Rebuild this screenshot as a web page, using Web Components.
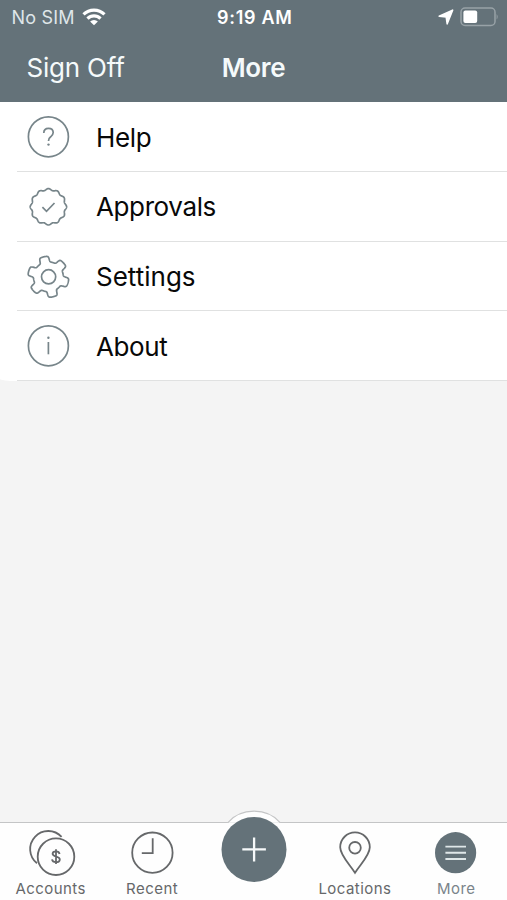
<!DOCTYPE html>
<html lang="en">
<head>
<meta charset="utf-8">
<title>More</title>
<style>
    body {
        margin: 0;
        font-family: Inter, "Liberation Sans", sans-serif;
        --slate: #647279;
    }
</style>
</head>
<body>
<mobile-app></mobile-app>

<script>
const outline = (name) => {
    // Closed wavy outlines for the seal and the gear
    const points = [];
    for (let i = 0; i < 360; i++) {
        const a = i * Math.PI / 180;
        let r;
        if (name === 'seal') {
            r = 17.4 + 0.8 * Math.cos(12 * (a + Math.PI / 2));
        } else {
            const wave = Math.cos(6 * (a + 103 * Math.PI / 180)) + 0.05;
            r = 17.7 + 2.8 * Math.tanh(3.2 * wave);
        }
        points.push((22 + r * Math.cos(a)).toFixed(2) + ' ' + (22 + r * Math.sin(a)).toFixed(2));
    }
    return 'M' + points.join('L') + 'Z';
};

const icons = {
    help: `<circle cx="22" cy="22" r="20"/><path d="M17.4 18.2c0-3 2-4.7 4.7-4.7s4.7 1.7 4.7 4.3c0 2.2-1.1 3.1-2.5 4.2-1.5 1.1-2.2 1.9-2.2 4.2"/><circle cx="22.1" cy="29.8" r="1.2" fill="currentColor" stroke="none"/>`,
    approvals: `<path d="${outline('seal')}"/><path d="M16 22.4l4.1 4.1 8-8.3"/>`,
    settings: `<path d="${outline('gear')}" stroke-linejoin="round"/><circle cx="22.2" cy="22" r="7.1"/>`,
    about: `<circle cx="22" cy="22" r="20"/><path d="M22 18.2V30.5"/><circle cx="22" cy="14" r="1.2" fill="currentColor" stroke="none"/>`,
    accounts: `<path d="M9 33.3A18.1 18.1 0 1 1 33.6 6.9"/><circle cx="28" cy="26.7" r="18.3"/><path stroke-width="1.8" d="M31.6 24c-.3-1.8-1.6-2.7-3.6-2.7-2.1 0-3.4 1-3.4 2.5 0 3.5 7.2 1.9 7.2 5.6 0 1.7-1.5 2.7-3.8 2.7-2.3 0-3.7-1-4-2.8M28 19.3V34"/>`,
    recent: `<circle cx="23.4" cy="22.7" r="20.2"/><path d="M23.7 8.3v14.9H12.8"/>`,
    locations: `<path d="M23 42.8C18 34.7 8.2 25.4 8.2 17.2a14.8 14.8 0 0 1 29.6 0C37.8 25.4 28 34.7 23 42.8Z"/><circle cx="23" cy="17.8" r="5.8"/>`,
    more: `<circle cx="22.6" cy="22.7" r="20.6" fill="currentColor" stroke="none"/><path stroke="#dfe7e9" stroke-width="1.9" d="M12.4 16.6h20.6M12.4 22.8h20.6M12.4 29h20.6"/>`
};

class StatusBar extends HTMLElement {
    constructor() {
        super();
        this.attachShadow({ mode: 'open' });
        this.shadowRoot.innerHTML = `
            <style>
                :host {
                    display: grid;
                    grid-template-columns: 1fr auto 1fr;
                    align-items: center;
                    height: 34px;
                    padding: 0 8px 0 11.5px;
                    font-size: 18px;
                    color: #fff;
                }
                .carrier, .power { display: flex; align-items: center; }
                .carrier { color: #dfe6e9; letter-spacing: 0.2px; gap: 7.5px; }
                .power { justify-content: flex-end; gap: 6px; }
                .time { font-weight: 600; letter-spacing: 0.7px; margin-right: 1px; }
                svg { display: block; }
            </style>
            <div class="carrier">
                <span>No SIM</span>
                <svg width="24" height="18" viewBox="0 0 24 18" fill="none" stroke="#fff" stroke-width="3.2">
                    <path d="M1.5 6.4a15 15 0 0 1 21 0M5.5 10.6a9.2 9.2 0 0 1 13 0"/>
                    <path d="M12 17.3L8.1 13.6a5.5 5.5 0 0 1 7.8 0Z" fill="#fff" stroke="none"/>
                </svg>
            </div>
            <div class="time">9:19 AM</div>
            <div class="power">
                <svg width="16" height="16" viewBox="0 0 16 16"><path d="M14.6 1.2L9.2 14.8 8.2 7.9 1.2 7.3Z" fill="#fff" stroke="#fff" stroke-width="1.6" stroke-linejoin="round"/></svg>
                <svg width="39" height="20" viewBox="0 0 39 20">
                    <rect x="1" y="1" width="34" height="17.5" rx="4" fill="none" stroke="#98a2a7" stroke-width="1.5"/>
                    <rect x="3.4" y="3.4" width="13.8" height="12.6" rx="2" fill="#fff"/>
                    <path d="M36.6 7q2.2 2.8 0 5.6Z" fill="#98a2a7"/>
                </svg>
            </div>
        `;
    }
}

class NavBar extends HTMLElement {
    constructor() {
        super();
        this.attachShadow({ mode: 'open' });
        this.shadowRoot.innerHTML = `
            <style>
                :host {
                    display: grid;
                    grid-template-columns: 1fr auto 1fr;
                    align-items: center;
                    height: 66px;
                    padding: 0 26.5px;
                    color: #f5fafb;
                    font-size: 26px;
                    letter-spacing: -0.2px;
                }
                .title { font-weight: 600; letter-spacing: -0.3px; }
            </style>
            <div><slot name="left"></slot></div>
            <div class="title"><slot></slot></div>
        `;
    }
}

class MenuItem extends HTMLElement {
    constructor() {
        super();
        this.attachShadow({ mode: 'open' });
        this.shadowRoot.innerHTML = `
            <style>
                :host {
                    display: flex;
                    box-sizing: border-box;
                    height: 69.75px;
                    padding-left: 17px;
                    background: #fff;
                }
                :host(:last-of-type) { border-bottom-left-radius: 17px 2px; }
                .row {
                    flex: 1;
                    box-sizing: border-box;
                    display: flex;
                    align-items: center;
                    gap: 26px;
                    padding: 1.5px 0 0 9px;
                    border-bottom: 1px solid #e0e1e1;
                    font-size: 26px;
                    letter-spacing: -0.38px;
                    color: #080808;
                }
                svg { color: #77858a; }
                :host([icon="settings"]) .row { letter-spacing: 0; }
            </style>
            <div class="row">
                <svg width="44" height="44" viewBox="-0.4 0.2 44 44" fill="none" stroke="currentColor" stroke-width="1.7">${icons[this.getAttribute('icon')]}</svg>
                <slot></slot>
            </div>
        `;
    }
}

class TabItem extends HTMLElement {
    constructor() {
        super();
        this.attachShadow({ mode: 'open' });
        this.shadowRoot.innerHTML = `
            <style>
                :host {
                    display: flex;
                    flex-direction: column;
                    align-items: center;
                    padding-top: 7px;
                    color: #66686a;
                    font-size: 15px;
                    line-height: 20px;
                    letter-spacing: 0.45px;
                }
                :host([active]) { color: #7a848a; }
                :host([active]) svg { color: var(--slate); }
                svg { display: block; margin-bottom: 3px; overflow: visible; }
            </style>
            <svg width="46" height="46" viewBox="0 0 46 46" fill="none" stroke="currentColor" stroke-width="1.8">${icons[this.getAttribute('icon')]}</svg>
            <slot></slot>
        `;
    }
}

class TabBar extends HTMLElement {
    constructor() {
        super();
        this.attachShadow({ mode: 'open' });
        this.shadowRoot.innerHTML = `
            <style>
                :host {
                    position: relative;
                    display: grid;
                    grid-template-columns: repeat(5, 1fr);
                    box-sizing: border-box;
                    height: 78.5px;
                    border-top: 1.5px solid #c4c5c6;
                    background: #fefefe;
                }
                /* The add button rises above the bar */
                .add {
                    position: absolute;
                    left: 50%;
                    top: -13px;
                    transform: translateX(-50%);
                }
                ::slotted([icon="locations"]) { grid-column: 4; }
            </style>
            <slot></slot>
            <svg class="add" width="80" height="80" viewBox="0 0 80 80">
                <path d="M13.6 12.8C20 5.5 29 1.2 40 1.2S60 5.5 66.4 12.8" fill="#fefefe" stroke="#c4c5c6" stroke-width="1.2"/>
                <path d="M14 13.4h52v5H14Z" fill="#fefefe"/>
                <circle cx="40" cy="39.5" r="32.5" fill="#647279"/>
                <path d="M28.3 39.3h23.6M40.1 27.5v24" stroke="#f6f9fa" stroke-width="2.3"/>
            </svg>
        `;
    }
}

class MobileApp extends HTMLElement {
    constructor() {
        super();
        this.attachShadow({ mode: 'open' });
        this.shadowRoot.innerHTML = `
            <style>
                :host {
                    display: flex;
                    flex-direction: column;
                    height: 900px;
                    overflow: hidden;
                    background: #f4f4f4;
                }
                header { height: 102px; background: var(--slate); }
                main { flex: 1; }
            </style>
            <header>
                <status-bar></status-bar>
                <nav-bar><span slot="left">Sign Off</span>More</nav-bar>
            </header>
            <main>
                <menu-item icon="help">Help</menu-item>
                <menu-item icon="approvals">Approvals</menu-item>
                <menu-item icon="settings">Settings</menu-item>
                <menu-item icon="about">About</menu-item>
            </main>
            <tab-bar>
                <tab-item icon="accounts">Accounts</tab-item>
                <tab-item icon="recent">Recent</tab-item>
                <tab-item icon="locations">Locations</tab-item>
                <tab-item icon="more" active>More</tab-item>
            </tab-bar>
        `;
    }
}

customElements.define('status-bar', StatusBar);
customElements.define('nav-bar', NavBar);
customElements.define('menu-item', MenuItem);
customElements.define('tab-item', TabItem);
customElements.define('tab-bar', TabBar);
customElements.define('mobile-app', MobileApp);
</script>
</body>
</html>
